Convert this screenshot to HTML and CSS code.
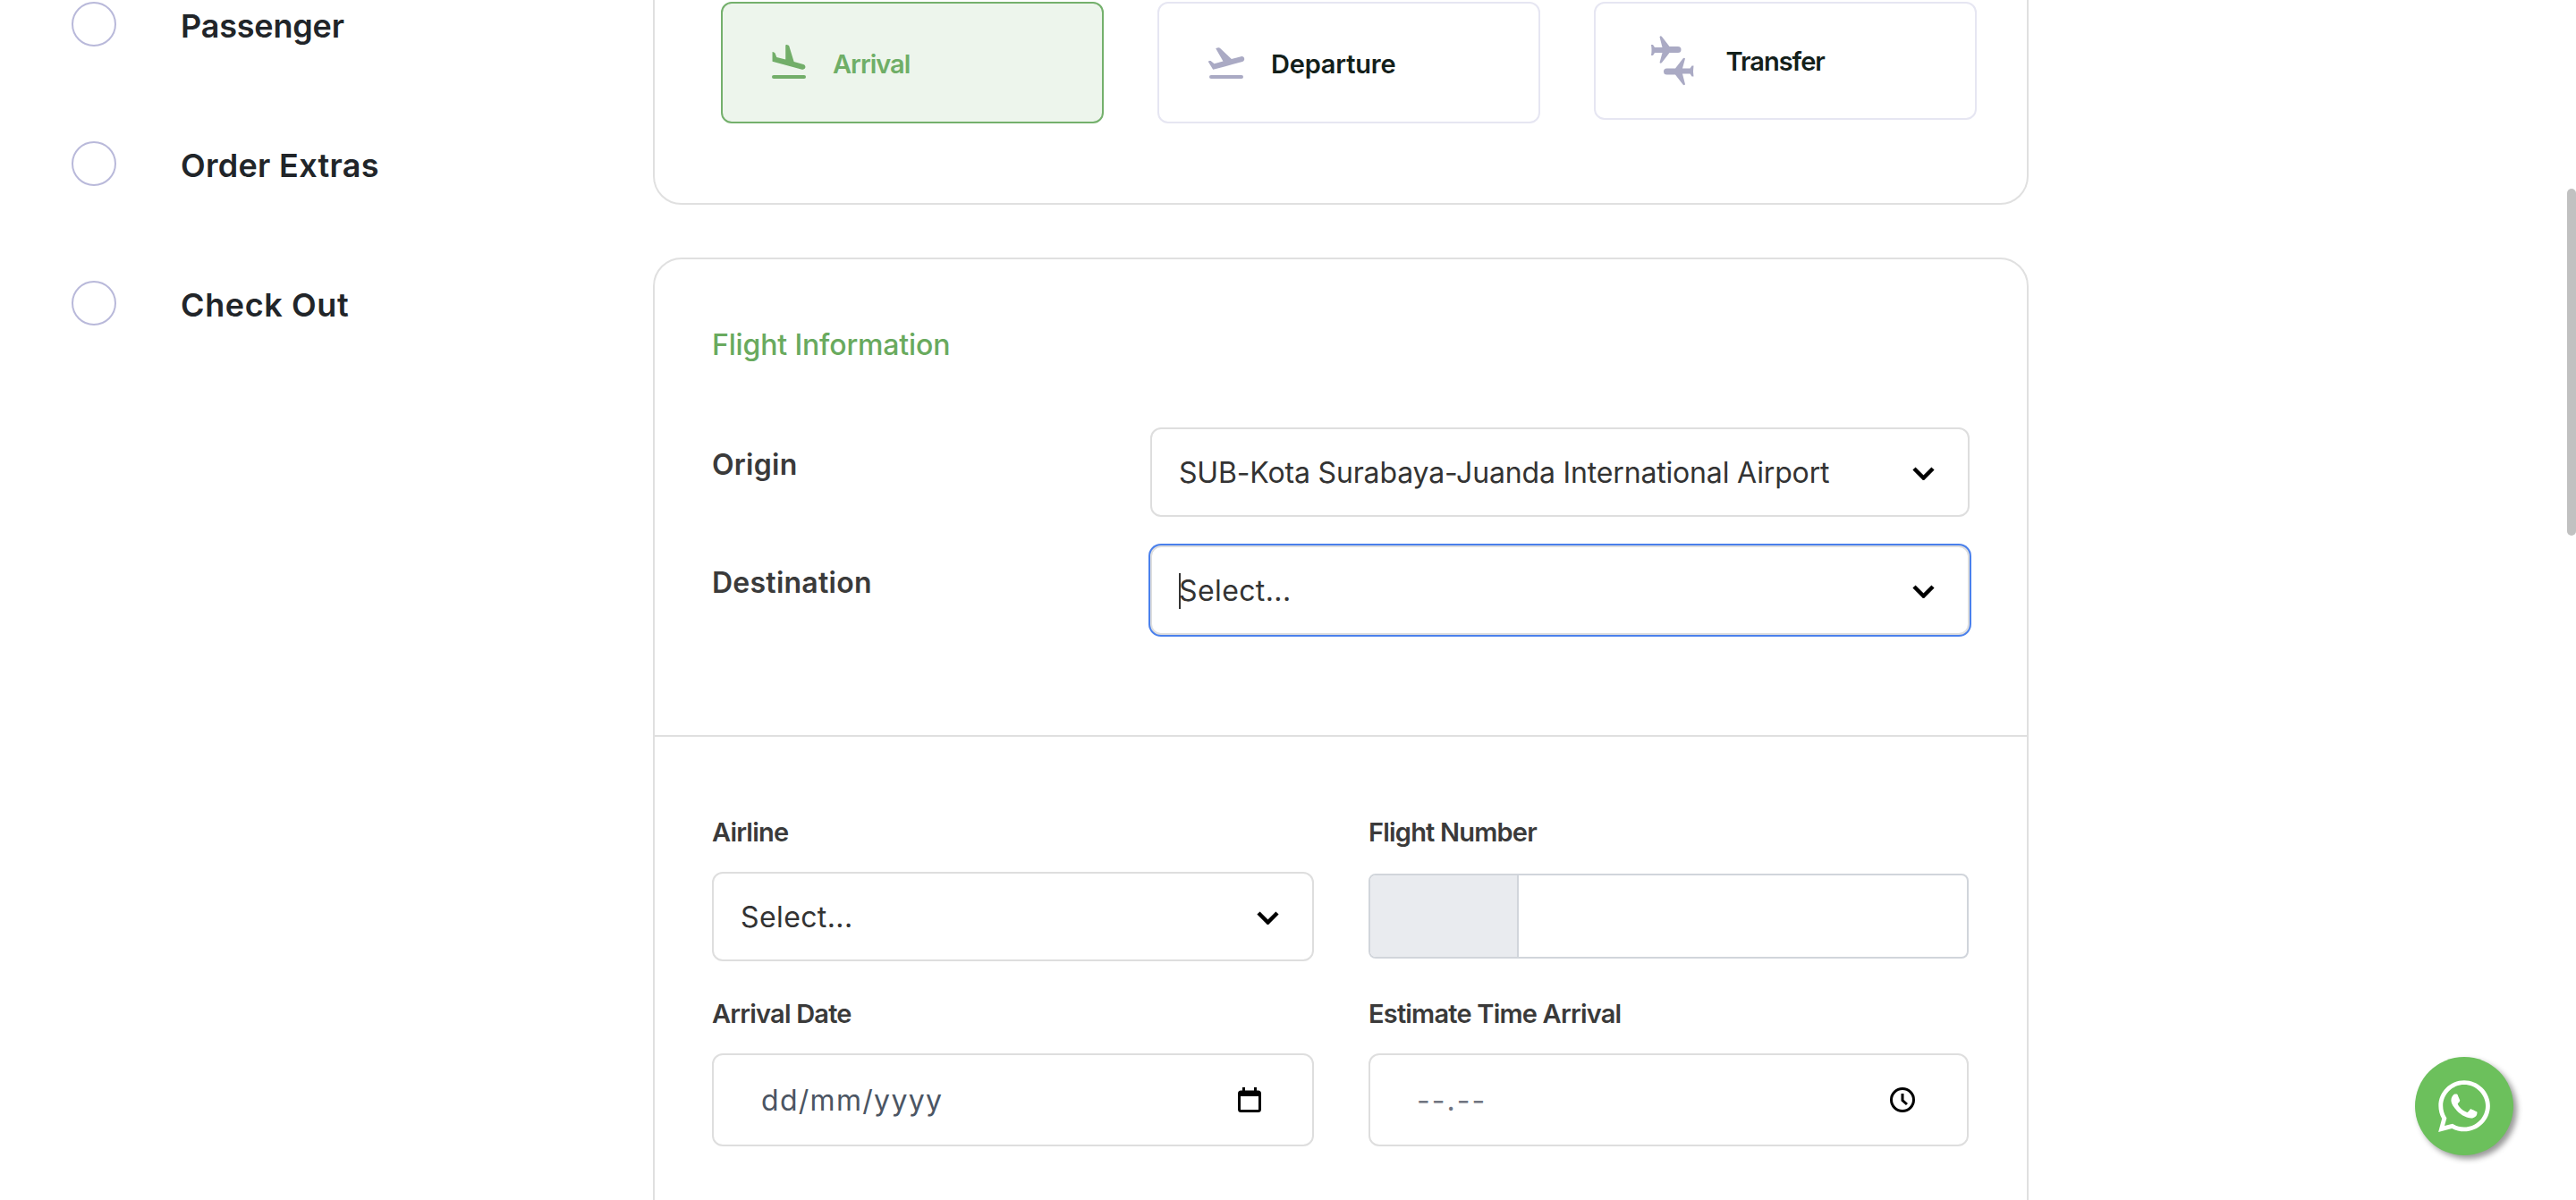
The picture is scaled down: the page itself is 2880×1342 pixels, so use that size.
FILE: index.html
```html
<!DOCTYPE html>
<html lang="en">
<head>
<meta charset="utf-8">
<title>Flight Information</title>
<link rel="stylesheet" href="styles.css">
</head>
<body>
<div class="page">
  <aside class="steps">
    <div class="step"><span class="step-dot"></span><span class="step-name step-passenger">Passenger</span></div>
    <div class="step"><span class="step-dot"></span><span class="step-name step-extras">Order Extras</span></div>
    <div class="step"><span class="step-dot"></span><span class="step-name step-checkout">Check Out</span></div>
  </aside>
  <main class="main">
    <section class="card trip-card">
      <div class="option option-active">
        <svg class="option-icon" viewBox="0 0 24 24"><rect x="2.5" y="19" width="19" height="2" rx="1"/><path d="M19.34 15.85c.8.21 1.62-.26 1.84-1.06.21-.8-.26-1.62-1.06-1.84l-5.31-1.42-2.76-9.02L10.9 2c-.45-.1-.78.1-.78.6v7.68L5.15 8.95l-.93-2.32c-.3-.3-1.45-1-1.45-.39v5.17l16.57 4.44z"/></svg>
        <span class="option-name">Arrival</span>
      </div>
      <div class="option option-departure">
        <svg class="option-icon" viewBox="0 0 24 24"><rect x="2.5" y="19" width="19" height="2" rx="1"/><path d="M22.07 9.64c-.21-.8-1.04-1.28-1.84-1.06L14.92 10 8.6 4c-.3-.3-.6-.5-1-.4-.6.15-1.7.2-1.4.7l4.03 6.95-4.97 1.33-1.97-1.54c-.4-.2-1.6.1-1.3.6l2.59 4.28 1.6-.43 5.31-1.42 4.35-1.16L21 11.49c.81-.23 1.28-1.05 1.07-1.85z"/></svg>
        <span class="option-name">Departure</span>
      </div>
      <div class="option option-transfer">
        <svg class="transfer-icon" viewBox="0 0 47.5 55.5">
          <path d="M0 10h2l2 3h8.500L9.500 1.200q1-1.700 2.500-.2L20.500 12H30a3.500 3.500 0 0 1 0 7H20.500L12 30q-1.500 1.500-2.500 0L12.500 19H4l-2 3H0q1-6 0-12z"/>
          <g transform="rotate(180 23.75 27.75)"><path d="M0 10h2l2 3h8.500L9.500 1.200q1-1.700 2.500-.2L20.500 12H30a3.500 3.500 0 0 1 0 7H20.500L12 30q-1.500 1.500-2.500 0L12.500 19H4l-2 3H0q1-6 0-12z"/></g>
        </svg>
        <span class="option-name">Transfer</span>
      </div>
    </section>

    <section class="card flight-card">
      <div class="route">
        <h2 class="card-title">Flight Information</h2>
        <div class="route-row">
          <label class="route-label">Origin</label>
          <div class="field">
            <span class="field-text">SUB-Kota Surabaya-Juanda International Airport</span>
            <svg class="chevron" viewBox="0 0 25 15"><path d="M2 2l10.500 10.500L23 2"/></svg>
          </div>
        </div>
        <div class="route-row">
          <label class="route-label">Destination</label>
          <div class="field field-focus">
            <span class="caret"></span>
            <span class="field-text select-text">Select...</span>
            <svg class="chevron" viewBox="0 0 25 15"><path d="M2 2l10.500 10.500L23 2"/></svg>
          </div>
        </div>
      </div>
      <div class="details">
        <div class="detail">
          <label class="detail-label">Airline</label>
          <div class="field">
            <span class="field-text select-text">Select...</span>
            <svg class="chevron" viewBox="0 0 25 15"><path d="M2 2l10.500 10.500L23 2"/></svg>
          </div>
        </div>
        <div class="detail">
          <label class="detail-label">Flight Number</label>
          <div class="flight-number">
            <span class="flight-prefix"></span>
            <span class="flight-value"></span>
          </div>
        </div>
        <div class="detail">
          <label class="detail-label">Arrival Date</label>
          <div class="field field-tall">
            <span class="field-text date-text">dd/mm/yyyy</span>
            <svg class="picker-icon" viewBox="0 0 26 28"><rect x="1.500" y="5" width="23" height="21.500" rx="2"/><path class="picker-fill" d="M1 4h24v6H1zM5 0h3v5H5zM18 0h3v5h-3z"/></svg>
          </div>
        </div>
        <div class="detail">
          <label class="detail-label">Estimate Time Arrival</label>
          <div class="field field-tall field-time">
            <span class="field-text time-text">--.--</span>
            <svg class="picker-icon clock-icon" viewBox="0 0 28 28"><circle cx="14" cy="14" r="12.500"/><path d="M14 7v7.500l5 4.500"/></svg>
          </div>
        </div>
      </div>
    </section>
  </main>
</div>
<div class="scroll-thumb"></div>
<a class="whatsapp" aria-label="WhatsApp">
  <svg viewBox="0 0 448 512"><path d="M380.900 97.100C339 55.100 283.200 32 223.900 32c-122.400 0-222 99.600-222 222 0 39.100 10.200 77.300 29.600 111L0 480l117.700-30.900c32.400 17.700 68.900 27 106.100 27h.1c122.300 0 224.100-99.600 224.100-222 0-59.300-25.200-115-67.100-157zm-157 341.600c-33.200 0-65.700-8.900-94-25.700l-6.700-4-69.800 18.300L72 359.200l-4.400-7c-18.500-29.400-28.200-63.300-28.200-98.200 0-101.700 82.800-184.500 184.600-184.500 49.300 0 95.600 19.200 130.400 54.100 34.800 34.900 56.200 81.200 56.100 130.500 0 101.800-84.900 184.600-186.600 184.600zm101.200-138.200c-5.500-2.800-32.800-16.200-37.900-18-5.100-1.900-8.800-2.800-12.500 2.800-3.700 5.600-14.300 18-17.600 21.800-3.200 3.700-6.500 4.200-12 1.400-32.600-16.300-54-29.100-75.500-66-5.700-9.800 5.700-9.100 16.300-30.300 1.800-3.700.9-6.900-.5-9.700-1.400-2.800-12.500-30.100-17.100-41.200-4.500-10.800-9.100-9.300-12.500-9.500-3.200-.2-6.900-.2-10.600-.2-3.700 0-9.700 1.400-14.800 6.900-5.100 5.600-19.400 19-19.400 46.300 0 27.300 19.900 53.700 22.600 57.400 2.800 3.700 39.100 59.700 94.800 83.800 35.200 15.200 49 16.500 66.600 13.900 10.700-1.600 32.800-13.400 37.400-26.400 4.600-13 4.600-24.100 3.200-26.400-1.300-2.500-5-3.900-10.500-6.600z"/></svg>
</a>
</body>
</html>
```
FILE: styles.css
```css
html, body {
  margin: 0;
  height: 1342px;
  overflow: hidden;
  background: #fff;
  font-family: "Inter", "Noto Sans", sans-serif;
}
.page {
  display: flex;
  align-items: flex-start;
  height: 1342px;
  overflow: hidden;
}
.steps {
  width: 650px;
  padding: 2px 0 0 80px;
  flex: none;
}
.step {
  display: flex;
  align-items: center;
  gap: 72px;
  height: 50px;
  margin-bottom: 106px;
}
.step-dot {
  width: 50px;
  height: 50px;
  box-sizing: border-box;
  border: 2px solid #b9b9da;
  border-radius: 50%;
  flex: none;
}
.step-name {
  font-size: 36px;
  font-weight: 600;
  color: #212529;
  line-height: 50px;
  padding-top: 4px;
}
.step-passenger {
  letter-spacing: -0.2px;
}
.step-extras {
  letter-spacing: 0.3px;
}
.step-checkout {
  letter-spacing: 0.6px;
}
.main {
  width: 1538px;
  flex: none;
}
.card {
  box-sizing: border-box;
  width: 1538px;
  border: 2px solid #e0e0e0;
  border-radius: 32px;
  background: #fff;
}
.trip-card {
  display: flex;
  align-items: flex-start;
  gap: 60px;
  height: 269px;
  margin-top: -40px;
  padding: 40px 0 0 74px;
}
.option {
  box-sizing: border-box;
  display: flex;
  align-items: center;
  flex: none;
  width: 428px;
  height: 136px;
  padding-left: 50px;
  gap: 25px;
  border: 2px solid #e6e6f2;
  border-radius: 12px;
  fill: #aaaac4;
}
.option-active {
  border-color: #74b06c;
  background: #edf5ec;
  fill: #72ae69;
}
.option-departure {
  padding-left: 51px;
  gap: 26px;
}
.option-transfer {
  width: 428px;
  height: 132px;
  padding-left: 62px;
  gap: 36px;
}
.option-icon {
  width: 48px;
  height: 48px;
  flex: none;
}
.transfer-icon {
  width: 47.5px;
  height: 55.5px;
  flex: none;
}
.option-name {
  font-size: 29px;
  font-weight: 600;
  letter-spacing: -0.2px;
  color: #13201a;
  padding-top: 2px;
}
.option-active .option-name {
  color: #6fae67;
  letter-spacing: -1px;
}
.option-transfer .option-name {
  padding-top: 1px;
  letter-spacing: -1px;
}
.flight-card {
  margin-top: 59px;
  padding-bottom: 120px;
}
.route {
  padding: 72px 64px 112px;
  border-bottom: 2px solid #e0e0e0;
}
.card-title {
  margin: 0 0 68px;
  font-size: 32px;
  line-height: 48px;
  font-weight: 500;
  letter-spacing: -0.15px;
  color: #69aa5e;
}
.route-row {
  display: grid;
  grid-template-columns: 490px 916px;
  margin-bottom: 32px;
}
.route-row:last-child {
  margin-bottom: 0;
}
.route-label {
  font-size: 32px;
  line-height: 40px;
  font-weight: 600;
  letter-spacing: 0.25px;
  color: #3a3a3a;
  padding-top: 22px;
}
.field {
  box-sizing: border-box;
  display: flex;
  align-items: center;
  justify-content: space-between;
  height: 100px;
  padding: 2px 37px 0 30px;
  border: 2px solid #dedede;
  border-radius: 12px;
  background: #fff;
}
.field-focus {
  box-shadow: 0 0 0 2px #4a80ec;
}
.caret {
  width: 2px;
  height: 40px;
  margin-right: -2px;
  background: #333;
  flex: none;
}
.field-focus .field-text {
  flex: 1;
}
.field-text {
  font-size: 32px;
  line-height: 40px;
  font-weight: 400;
  letter-spacing: -0.16px;
  color: #333;
}
.select-text {
  letter-spacing: 0.4px;
}
.chevron {
  width: 25px;
  height: 15px;
  flex: none;
  fill: none;
  stroke: #000;
  stroke-width: 4.500;
}
.details {
  display: grid;
  grid-template-columns: 673px 671px;
  column-gap: 61px;
  row-gap: 41px;
  padding: 89px 64px 0;
}
.detail {
  display: flex;
  flex-direction: column;
}
.detail-label {
  display: block;
  margin-bottom: 26px;
  font-size: 29px;
  line-height: 36px;
  font-weight: 600;
  letter-spacing: -0.8px;
  color: #3a3a3a;
}
.flight-number {
  box-sizing: border-box;
  display: flex;
  height: 95px;
  margin-top: 2px;
  border: 2px solid #d1d5db;
  border-radius: 8px;
  overflow: hidden;
}
.flight-prefix {
  width: 164px;
  background: #e9ebef;
  border-right: 2px solid #d1d5db;
  flex: none;
}
.flight-value {
  flex: 1;
}
.field-tall {
  height: 104px;
  padding: 2px 57px 0 53px;
}
.field-time {
  padding-left: 52px;
  padding-right: 58px;
}
.date-text {
  color: #4b5563;
  letter-spacing: 1.3px;
}
.time-text {
  color: #6f7480;
  letter-spacing: 2px;
}
.picker-icon {
  width: 26px;
  height: 28px;
  margin-top: -3px;
  fill: none;
  stroke: #000;
  stroke-width: 3;
  flex: none;
}
.clock-icon {
  width: 28px;
}
.picker-fill {
  fill: #000;
  stroke: none;
}
.scroll-thumb {
  position: fixed;
  right: 0;
  top: 211px;
  width: 10px;
  height: 388px;
  border-radius: 5px;
  background: #c1c1c1;
}
.whatsapp {
  position: fixed;
  left: 2700px;
  top: 1182px;
  width: 110px;
  height: 110px;
  display: flex;
  align-items: center;
  justify-content: center;
  border-radius: 50%;
  background: #6cc05c;
  box-shadow: 4px 4px 6px #999;
  fill: #fff;
}
.whatsapp svg {
  width: 58px;
  height: 66px;
}
```
